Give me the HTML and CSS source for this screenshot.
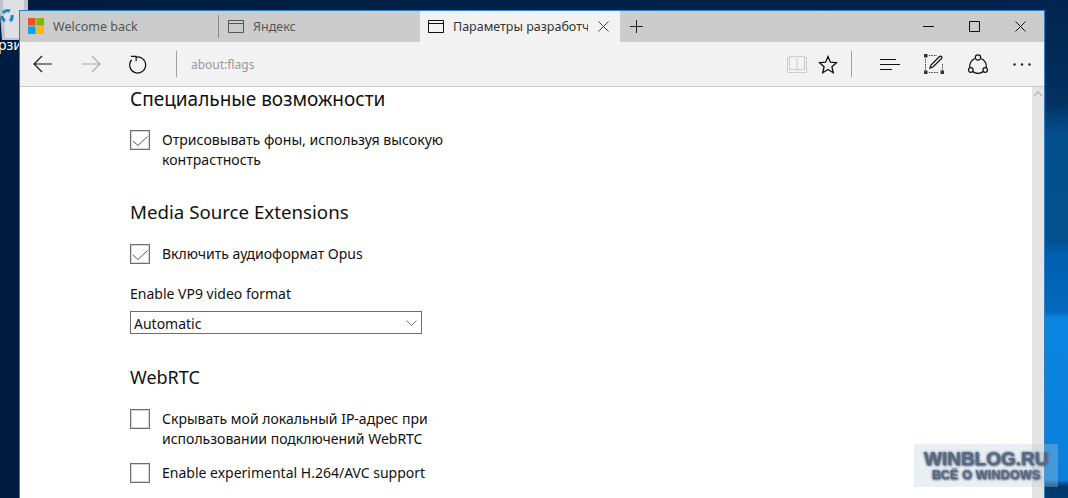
FILE: index.html
```html
<!DOCTYPE html>
<html lang="ru">
<head>
<meta charset="utf-8">
<title>about:flags</title>
<link rel="stylesheet" href="styles.css">
</head>
<body>
<div class="desktop-icon">
  <svg width="30" height="42" viewBox="0 0 30 42"><path d="M0 0h29v12l-3 28H3z" fill="#bcc3c9"/><path d="M4 0h21v11l-2 27H6z" fill="#dde1e5"/><path d="M4 13a6 6 0 0 1 7-2M13 15a6 6 0 0 1-2 6M6 21a6 6 0 0 1-3-5" fill="none" stroke="#1b87c9" stroke-width="3"/></svg>
</div>
<div class="desktop-label">рзи</div>
<main class="window">
  <header class="tabstrip">
    <div class="tab tab-first">
      <svg class="logo" width="16" height="16" viewBox="0 0 16 16"><rect width="7.6" height="7.6" fill="#f25022"/><rect x="8.4" width="7.6" height="7.6" fill="#7fba00"/><rect y="8.4" width="7.6" height="7.6" fill="#00a4ef"/><rect x="8.4" y="8.4" width="7.6" height="7.6" fill="#ffb900"/></svg>
      <span class="tab-title">Welcome back</span>
    </div>
    <div class="tab tab-second">
      <svg class="page" width="16" height="13" viewBox="0 0 16 13"><path d="M.5.5h15v12H.5zM.5 3.5h15" fill="none" stroke="#555"/></svg>
      <span class="tab-title">Яндекс</span>
    </div>
    <div class="tab tab-active">
      <svg class="page" width="16" height="13" viewBox="0 0 16 13"><path d="M.5.5h15v12H.5zM.5 3.5h15" fill="none" stroke="#111"/></svg>
      <span class="tab-title">Параметры разработчика</span>
      <svg class="tab-close" width="11" height="11" viewBox="0 0 11 11"><path d="M.5.5l10 10M10.5.5l-10 10" stroke="#444" fill="none"/></svg>
    </div>
    <svg class="newtab" width="13" height="13" viewBox="0 0 13 13"><path d="M6.5 0v13M0 6.5h13" stroke="#222" fill="none"/></svg>
    <div class="caption">
      <svg width="11" height="11" viewBox="0 0 11 11"><path d="M0 5.500h11" stroke="#111" fill="none"/></svg>
      <svg width="11" height="11" viewBox="0 0 11 11"><path d="M.5.5h10v10H.5z" stroke="#111" fill="none"/></svg>
      <svg width="11" height="11" viewBox="0 0 11 11"><path d="M.5.5l10 10M10.5.5l-10 10" stroke="#111" fill="none"/></svg>
    </div>
  </header>
  <nav class="toolbar">
    <svg class="nav-icon" width="20" height="18" viewBox="0 0 20 18"><path d="M19 9H1M9 1L1 9l8 8" fill="none" stroke="#111" stroke-width="1.1"/></svg>
    <svg class="nav-icon nav-fwd" width="20" height="18" viewBox="0 0 20 18"><path d="M1 9h18M11 1l8 8-8 8" fill="none" stroke="#aaa" stroke-width="1.1"/></svg>
    <svg class="nav-icon nav-refresh" width="19" height="19" viewBox="0 0 20 20"><path d="M7 2.400A8.400 8.400 0 1 1 2.800 5" fill="none" stroke="#111" stroke-width="1.300"/><path d="M2 1.500h5.500v5" fill="none" stroke="#111" stroke-width="1.200"/></svg>
    <span class="sep sep-addr"></span>
    <span class="address">about:flags</span>
    <svg class="tool-book" width="20" height="18" viewBox="0 0 20 18"><path d="M.5 2.500h2v-1h6.500l1 1 1-1h6.500v1h2v15H.5zM2.500 2.500v12h7l.5 1 .5-1h7v-12M10 2.500v12" fill="none" stroke="#ccc"/></svg>
    <svg class="tool-star" width="20" height="19" viewBox="0 0 20 19"><path d="M10 1.500l2.400 5.700 6.100.5-4.600 4 1.400 6-5.300-3.200-5.300 3.200 1.400-6-4.600-4 6.100-.5z" fill="none" stroke="#111" stroke-width="1.300"/></svg>
    <span class="sep sep-tools"></span>
    <svg class="tool-hub" width="20" height="13" viewBox="0 0 20 13"><path d="M0 1.500h16M0 6.500h20M0 11.500h12" stroke="#111" stroke-width="1.200" fill="none"/></svg>
    <svg class="tool-note" width="20" height="20" viewBox="0 0 20 20"><path d="M1.500 5v11M18.500 10v6M5 1.500h8M5 18.500h10" stroke="#444" stroke-dasharray="1.500 1" fill="none"/><path d="M0 0h3.500v3.500H0zM0 16.500h3.500V20H0zM16.500 16.500H20V20h-3.500z" fill="#333"/><path d="M6 14l1-3 8.500-8.500a1.400 1.400 0 0 1 2 2L9 13z" fill="none" stroke="#111" stroke-width="1.300"/></svg>
    <svg class="tool-share" width="20" height="20" viewBox="0 0 20 20"><path d="M6.700 4.600a8 8 0 0 0-4.700 9.400M13.300 4.600a8 8 0 0 1 4.700 9.400M4.800 17.500a8 8 0 0 0 10.400 0" fill="none" stroke="#111" stroke-width="1.200"/><circle cx="10" cy="3.500" r="2.700" fill="none" stroke="#111" stroke-width="1.200"/><circle cx="2.800" cy="16" r="2.300" fill="none" stroke="#111" stroke-width="1.200"/><circle cx="17.200" cy="16" r="2.300" fill="none" stroke="#111" stroke-width="1.200"/></svg>
    <svg class="tool-more" width="18" height="3" viewBox="0 0 18 3"><circle cx="1.500" cy="1.500" r="1.200" fill="#222"/><circle cx="9" cy="1.500" r="1.200" fill="#222"/><circle cx="16.500" cy="1.500" r="1.200" fill="#222"/></svg>
  </nav>
  <div class="viewport">
    <section class="content">
      <h2 class="heading heading-first">Специальные возможности</h2>
      <div class="option option-first">
        <span class="box"><svg width="18" height="18" viewBox="0 0 18 18"><path d="M2 10l5 4.500 9.500-9" fill="none" stroke="#555"/></svg></span>
        <span class="label">Отрисовывать фоны, используя высокую контрастность</span>
      </div>
      <h2 class="heading heading-media">Media Source Extensions</h2>
      <div class="option option-opus">
        <span class="box"><svg width="18" height="18" viewBox="0 0 18 18"><path d="M2 10l5 4.500 9.500-9" fill="none" stroke="#555"/></svg></span>
        <span class="label">Включить аудиоформат Opus</span>
      </div>
      <div class="field-label">Enable VP9 video format</div>
      <div class="select">
        <span>Automatic</span>
        <svg width="11" height="6" viewBox="0 0 11 6"><path d="M.5.500l5 5 5-5" fill="none" stroke="#777"/></svg>
      </div>
      <h2 class="heading heading-webrtc">WebRTC</h2>
      <div class="option option-ip">
        <span class="box"></span>
        <span class="label label-narrow">Скрывать мой локальный IP-адрес при использовании подключений WebRTC</span>
      </div>
      <div class="option option-h264">
        <span class="box"></span>
        <span class="label">Enable experimental H.264/AVC support</span>
      </div>
    </section>
    <aside class="scrollbar">
      <svg width="10" height="6" viewBox="0 0 10 6"><path d="M1 5l4-4 4 4" fill="none" stroke="#b5b5b5" stroke-width="1.300"/></svg>
    </aside>
  </div>
</main>
<div class="watermark">
  <div class="wm-title">WINBLOG.RU</div>
  <div class="wm-sub">ВСЁ О WINDOWS</div>
</div>
</body>
</html>
```
FILE: styles.css
```css
* { box-sizing: border-box; }
html, body { margin: 0; height: 498px; overflow: hidden; }
body {
  position: relative;
  width: 1068px;
  padding: 10px 23px 0 19px;
  font-family: "Noto Sans", "Open Sans", sans-serif;
  background:
    linear-gradient(180deg, #01244f 0, #02305f 100px, #04508f 135px, #03518f 240px, #0060b0 255px, #0468bd 312px, #0a86e2 318px, #0b80d8 480px, #00386b 486px, #003a6e 498px) right top / 24px 100% no-repeat,
    linear-gradient(90deg, #001c40 0, #00244e 100%);
}
.desktop-icon { position: absolute; left: -1px; top: 0; }
.desktop-label { position: absolute; left: -2px; top: 36px; color: #fff; font-size: 14px; line-height: 18px; }

.window {
  position: relative;
  height: 488px;
  display: flex;
  flex-direction: column;
  background: #fff;
  border: 1px solid #2a80c8;
  border-bottom: 0;
}

.tabstrip { display: flex; align-items: stretch; height: 31px; background: #ccc; flex: none; }
.tab { display: flex; align-items: center; flex: none; font-size: 12.500px; color: #555; padding-bottom: 1px; }
.tab-first { width: 198px; padding-left: 8px; }
.tab-second { width: 202px; padding-left: 9px; border-left: 1px solid #888; border-image: linear-gradient(180deg, #ccc 5px, #888 5px, #888 26px, #ccc 26px) 1; }
.tab-active { width: 200px; padding-left: 8px; background: #f2f2f2; color: #333; }
.tab-title { white-space: nowrap; overflow: hidden; }
.logo { margin-right: 9px; flex: none; }
.page { margin-right: 9px; flex: none; }
.tab-active .tab-title { width: 135px; }
.tab-close { margin-left: 10px; flex: none; }
.newtab { align-self: center; margin-left: 10px; flex: none; }
.caption { margin-left: auto; display: flex; align-items: center; gap: 35px; padding-right: 18px; }

.toolbar { display: flex; align-items: center; height: 45px; flex: none; background: #f2f2f2; border-bottom: 1px solid #ccc; }
.nav-icon { flex: none; margin-left: 13px; }
.nav-fwd { margin-left: 28px; }
.nav-refresh { margin-left: 28px; }
.sep { flex: none; width: 1px; height: 26px; background: #a0a0a0; }
.sep-addr { margin-left: 28px; }
.address { margin-left: 14px; font-size: 12px; color: #999; }
.tool-book { margin-left: auto; flex: none; }
.tool-star { margin-left: 11px; flex: none; }
.sep-tools { margin-left: 13px; }
.tool-hub { margin-left: 28px; flex: none; }
.tool-note { margin-left: 24px; flex: none; }
.tool-share { margin-left: 24px; flex: none; }
.tool-more { margin-left: 25px; margin-right: 13px; flex: none; }

.viewport { flex: 1; display: flex; min-height: 0; }
.content { flex: 1; padding-left: 110px; color: #111; }
.scrollbar { flex: none; width: 12px; background: #e4e4e4; display: flex; justify-content: center; align-items: flex-start; padding-top: 4px; }

.heading { margin: 0; font-weight: 400; font-size: 18.700px; line-height: 24px; color: #111; }
.heading-first { margin-top: 0; font-size: 19px; }
.heading-media { margin-top: 30px; }
.heading-webrtc { margin-top: 31px; font-size: 18px; }

.option { display: flex; align-items: flex-start; gap: 12px; font-size: 14px; line-height: 20px; }
.option-first { margin-top: 19px; font-size: 14.100px; }
.option-opus { margin-top: 20px; }
.option-ip { margin-top: 20px; }
.option-h264 { margin-top: 14px; }
.box { flex: none; width: 20px; height: 20px; border: 1px solid #6e6e6e; background: #fff; display: block; box-shadow: inset 0 0 0 1px rgba(120, 120, 120, .3); }
.box svg { display: block; }
.label { width: 290px; }
.label-narrow { width: 280px; }

.field-label { margin-top: 20px; font-size: 14px; line-height: 20px; }
.select {
  margin-top: 7px; width: 292px; height: 23px;
  border: 1px solid #6e6e6e;
  display: flex; align-items: center; justify-content: space-between;
  padding: 1px 4px 0 3px;
  font-size: 14px;
}

.watermark {
  position: absolute; left: 914px; top: 444px; width: 144px; height: 43px;
  background: rgba(190, 205, 220, .32);
  display: flex; flex-direction: column; align-items: center;
  font-family: "Liberation Sans", sans-serif; font-weight: 700; color: rgba(85, 102, 128, .85);
  text-shadow: 0 0 3px #5c6b82, 1px 1px 2px #5c6b82;
}
.wm-title { font-size: 19px; line-height: 19px; margin-top: 5px; }
.wm-sub { font-size: 12.500px; line-height: 14px; letter-spacing: .2px; }
```
